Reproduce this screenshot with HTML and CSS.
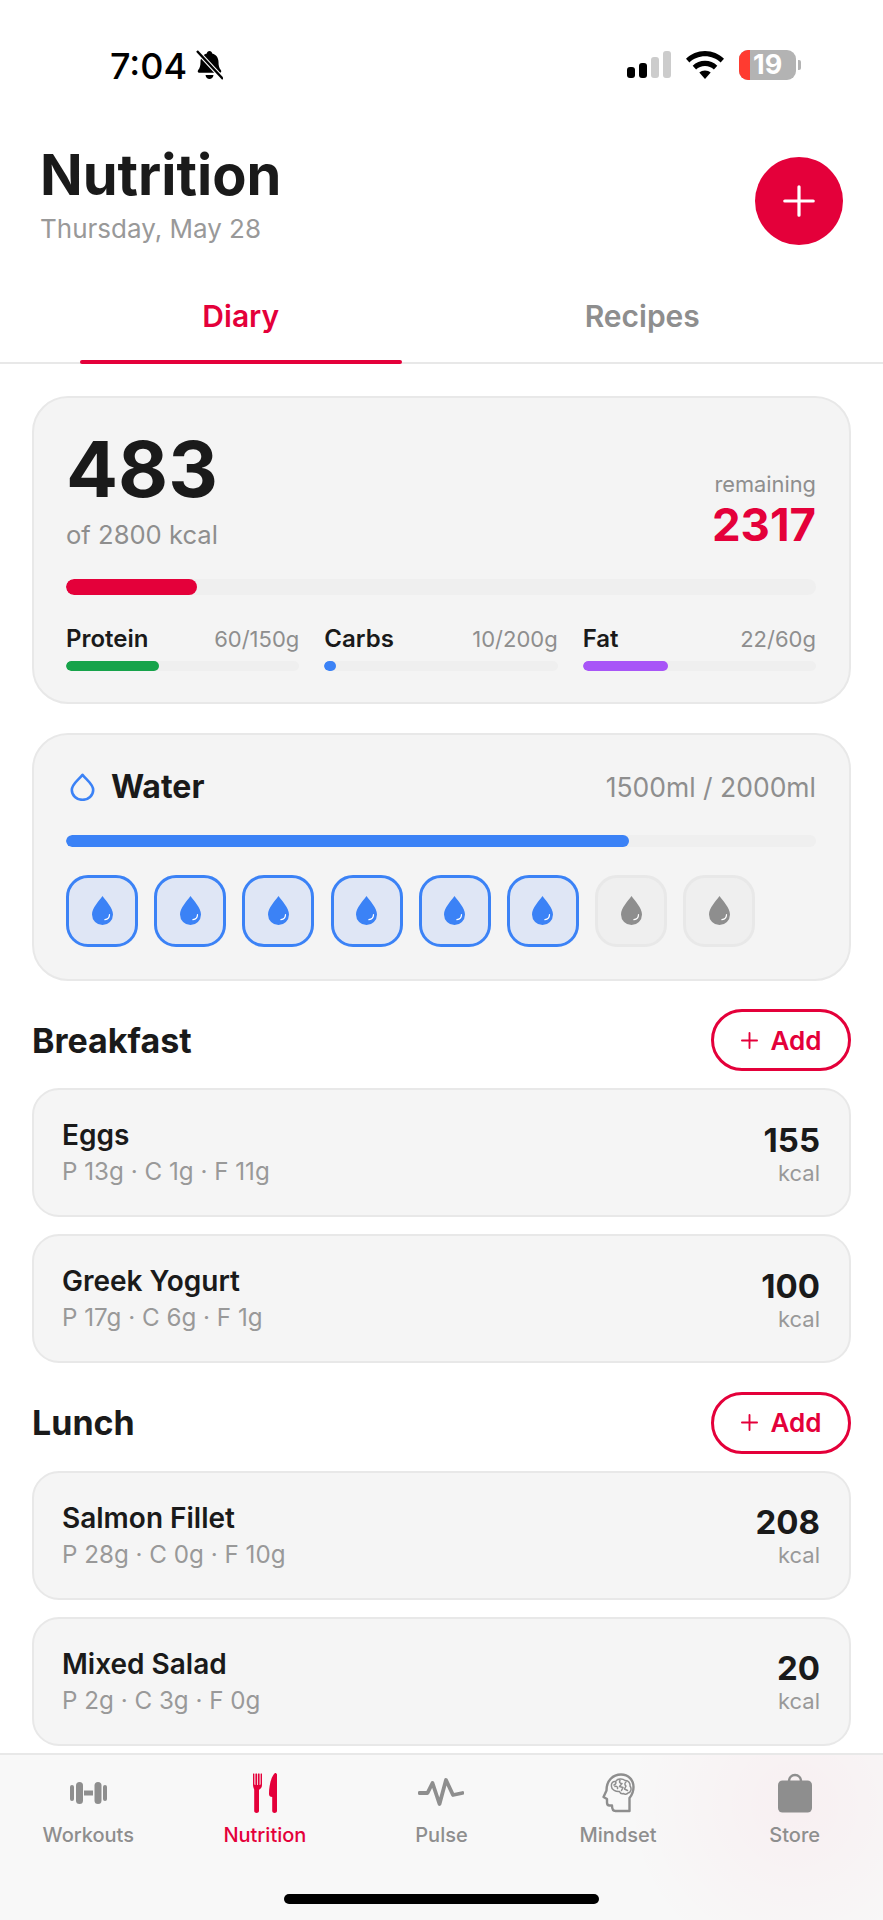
FILE: index.html
```html
<!DOCTYPE html>
<html>
<head>
  <title>Nutrition</title>
  <link rel="stylesheet" href="styles.css">
</head>
<body>
  <svg class="defs" width="0" height="0">
    <symbol id="drop" viewBox="0 0 21 29">
      <path fill="currentColor" d="M10.5 0C14 5 21 12 21 18.5a10.5 10.5 0 0 1-21 0C0 12 7 5 10.5 0Z"/>
      <path fill="none" stroke="#fff" stroke-width="1.2" stroke-linecap="round" d="M17.5 18.5c0 2.8-1.8 4.8-4.6 5.2"/>
    </symbol>
    <symbol id="plus" viewBox="0 0 18 18">
      <path fill="none" stroke="currentColor" stroke-linecap="round" d="M9 1v16M1 9h16"/>
    </symbol>
  </svg>

  <div class="status">
    <div class="status-left">
      <span class="time">7:04</span>
      <svg class="bell" viewBox="0 0 27 30" width="27" height="30">
        <path fill="#000" d="M13.5 1c1.5 0 2.5 1 2.700 2.400 4 1 6.300 4.400 6.300 8.600 0 3.400.6 6 2.300 8 1 1.200.4 2.800-1 2.800H3.200c-1.400 0-2-1.600-1-2.800 1.700-2 2.300-4.600 2.300-8 0-4.200 2.300-7.600 6.300-8.600C11 2 12 1 13.500 1ZM9.500 25h8c-.3 2.400-2 4-4 4s-3.700-1.600-4-4Z"/>
        <path stroke="#fff" stroke-width="4.500" d="M1 1l25 27"/>
        <path stroke="#000" stroke-width="2.400" d="M1 1l26 28"/>
      </svg>
    </div>
    <div class="status-right">
      <div class="signal">
        <i class="on s1"></i><i class="on s2"></i><i class="s3"></i><i class="s4"></i>
      </div>
      <svg class="wifi" viewBox="0 0 38 28" width="38" height="28">
        <path fill="#000" d="M19 0c7.400 0 14 2.900 19 7.700l-3.400 3.700C30.500 7.500 25 5.200 19 5.200S7.500 7.500 3.400 11.400L0 7.700C5 2.900 11.600 0 19 0Z"/>
        <path fill="#000" d="M19 9.800c4.700 0 9 1.800 12.300 4.900l-3.400 3.700c-2.300-2.200-5.400-3.500-8.900-3.500s-6.600 1.300-8.900 3.500l-3.400-3.700C10 11.600 14.300 9.800 19 9.800Z"/>
        <path fill="#000" d="M19 19.400c2.200 0 4.200.8 5.700 2.200L19 28l-5.700-6.400c1.500-1.400 3.500-2.200 5.700-2.200Z"/>
      </svg>
      <div class="battery">
        <div class="battery-body"><span class="battery-low"></span><span class="battery-num">19</span></div>
        <span class="battery-cap"></span>
      </div>
    </div>
  </div>

  <div class="header">
    <div>
      <h1>Nutrition</h1>
      <p class="date">Thursday, May 28</p>
    </div>
    <div class="fab"><svg width="32" height="32"><use href="#plus"/></svg></div>
  </div>

  <div class="tabs">
    <div class="tab active">Diary</div>
    <div class="tab">Recipes</div>
  </div>

  <div class="main">
    <div class="card calories">
      <div class="cal-top">
        <div>
          <div class="cal-num">483</div>
          <div class="cal-of">of 2800 kcal</div>
        </div>
        <div class="cal-right">
          <div class="cal-label">remaining</div>
          <div class="cal-left">2317</div>
        </div>
      </div>
      <div class="bar bar-main"><div class="fill red" style="width:17.4%"></div></div>
      <div class="macros">
        <div>
          <div class="macro-row"><b>Protein</b><span>60/150g</span></div>
          <div class="bar bar-small"><div class="fill green" style="width:40%"></div></div>
        </div>
        <div>
          <div class="macro-row"><b>Carbs</b><span>10/200g</span></div>
          <div class="bar bar-small"><div class="fill blue" style="width:5%"></div></div>
        </div>
        <div>
          <div class="macro-row"><b>Fat</b><span>22/60g</span></div>
          <div class="bar bar-small"><div class="fill purple" style="width:36.67%"></div></div>
        </div>
      </div>
    </div>

    <div class="card water">
      <div class="water-top">
        <div class="water-title">
          <svg viewBox="0 0 25 28" width="25" height="28"><path fill="none" stroke="#3b82f6" stroke-width="2.600" stroke-linejoin="round" d="M12.500 1.800C16 6.500 23.200 11 23.200 17a10.700 9.800 0 0 1-21.400 0C1.800 11 9 6.500 12.500 1.800Z"/></svg>
          <span>Water</span>
        </div>
        <span class="water-amount">1500ml / 2000ml</span>
      </div>
      <div class="bar bar-water"><div class="fill blue" style="width:75%"></div></div>
      <div class="glasses">
        <div class="glass full"><svg width="21" height="29"><use href="#drop"/></svg></div>
        <div class="glass full"><svg width="21" height="29"><use href="#drop"/></svg></div>
        <div class="glass full"><svg width="21" height="29"><use href="#drop"/></svg></div>
        <div class="glass full"><svg width="21" height="29"><use href="#drop"/></svg></div>
        <div class="glass full"><svg width="21" height="29"><use href="#drop"/></svg></div>
        <div class="glass full"><svg width="21" height="29"><use href="#drop"/></svg></div>
        <div class="glass"><svg width="21" height="29"><use href="#drop"/></svg></div>
        <div class="glass"><svg width="21" height="29"><use href="#drop"/></svg></div>
      </div>
    </div>

    <div class="meal">
      <div class="meal-head">
        <h2>Breakfast</h2>
        <div class="add"><svg width="17" height="17"><use href="#plus"/></svg>Add</div>
      </div>
      <div class="item">
        <div><div class="item-name">Eggs</div><div class="item-macros">P 13g · C 1g · F 11g</div></div>
        <div class="item-cal"><div class="item-num">155</div><div class="item-unit">kcal</div></div>
      </div>
      <div class="item">
        <div><div class="item-name">Greek Yogurt</div><div class="item-macros">P 17g · C 6g · F 1g</div></div>
        <div class="item-cal"><div class="item-num">100</div><div class="item-unit">kcal</div></div>
      </div>
    </div>

    <div class="meal">
      <div class="meal-head">
        <h2>Lunch</h2>
        <div class="add"><svg width="17" height="17"><use href="#plus"/></svg>Add</div>
      </div>
      <div class="item">
        <div><div class="item-name">Salmon Fillet</div><div class="item-macros">P 28g · C 0g · F 10g</div></div>
        <div class="item-cal"><div class="item-num">208</div><div class="item-unit">kcal</div></div>
      </div>
      <div class="item">
        <div><div class="item-name">Mixed Salad</div><div class="item-macros">P 2g · C 3g · F 0g</div></div>
        <div class="item-cal"><div class="item-num">20</div><div class="item-unit">kcal</div></div>
      </div>
    </div>
  </div>

  <div class="nav">
    <div class="nav-items">
      <div class="nav-item">
        <svg viewBox="0 -9 37 40" width="37" height="40"><g fill="currentColor"><rect x="0" y="3" width="4" height="16" rx="2"/><rect x="6" y="0" width="7" height="22" rx="3.500"/><rect x="14" y="8.500" width="9" height="5"/><rect x="24.500" y="0" width="7" height="22" rx="3.500"/><rect x="33" y="3" width="4" height="16" rx="2"/></g></svg>
        <span>Workouts</span>
      </div>
      <div class="nav-item active">
        <svg viewBox="0 0 24 40" width="24" height="40"><g fill="currentColor"><path d="M0 1c0-.6 1.400-.6 1.400 0v10c0 .8.600 1 1 1V1c0-.6 1.700-.6 1.700 0v11h.8V1c0-.6 1.700-.6 1.700 0v11c.4 0 1-.2 1-1V1c0-.6 1.400-.6 1.400 0v11c0 2.500-1.400 4-3 4.800V38c0 2.600-4.800 2.600-4.800 0V16.800C1.400 16 0 14.500 0 12Z"/><path d="M22 0c1 0 2 .6 2 1.500V38c0 2.600-4.800 2.600-4.800 0V24c-2 0-3.200-1-3.200-3C16 13 18 3.500 22 0Z"/></g></svg>
        <span>Nutrition</span>
      </div>
      <div class="nav-item">
        <svg viewBox="0 -4 46 40" width="46" height="40"><path fill="none" stroke="currentColor" stroke-width="3.800" stroke-linecap="round" stroke-linejoin="round" d="M1.500 16H9.500L14.500 6 21.500 27 28 3 35 18 44.500 16"/></svg>
        <span>Pulse</span>
      </div>
      <div class="nav-item">
        <svg viewBox="0 0 33 40" width="33" height="40"><g fill="none" stroke="currentColor" stroke-linecap="round" stroke-linejoin="round"><path stroke-width="2.400" d="M27.500 38H13.500c-2.500 0-3.500-2-3.500-5.500H7.500c-2 0-2.500-1.500-2.500-3V26L1.500 24 4.500 17.500C4.500 7.500 11 1.500 19 1.500c7.500 0 12.500 5.500 12.500 12.500 0 5-1.500 8-4 11Z"/><path stroke-width="1.500" d="M9.500 13c-.5-3 1.500-5 4-4.500 1.500-3 7-3.500 9.500-1 3-.5 5.500 2.500 5 5.500 2 2.500 1 6.500-2 7-1 1.500-3.500 1.500-4.500.5-2 .5-3.500-.5-4-2-3 .5-8.500-1.500-8-5.500ZM13.500 8.500c1 1.500 0 3-1.500 3.500M13 13.500c1.500-.5 3 .5 2.500 2M18 7.500c-1 1.500 0 3 2 3l-2.500 3 3.500 1-1.500 3M24 9c-1.500 1-1.500 3 0 4l-1.500 3 3 1.500"/></g></svg>
        <span>Mindset</span>
      </div>
      <div class="nav-item">
        <svg viewBox="0 0 34 39" width="34" height="40"><path fill="none" stroke="currentColor" stroke-width="2.400" d="M11 8c0-4 2.500-6.500 6-6.500s6 2.500 6 6.500"/><rect y="7" width="34" height="32" rx="4.500" fill="currentColor"/></svg>
        <span>Store</span>
      </div>
    </div>
    <div class="home-bar"></div>
  </div>
</body>
</html>
```

FILE: styles.css
```css
* {
  box-sizing: border-box;
  margin: 0;
  padding: 0;
}

body {
  font-family: Inter, "Liberation Sans", sans-serif;
  background: #fff;
  color: #1a1a1a;
  width: 883px;
  height: 1920px;
  display: flex;
  flex-direction: column;
  overflow: hidden;
}

.defs {
  display: block;
  height: 0;
}

/* status bar */
.status {
  height: 130px;
  flex-shrink: 0;
  display: flex;
  justify-content: space-between;
  align-items: center;
  padding: 0 82px 0 110px;
}

.status-left {
  display: flex;
  align-items: center;
  gap: 9px;
}

.time {
  font-size: 36px;
  font-weight: 500;
  color: #000;
  margin-top: 1px;
}

.status-right {
  display: flex;
  align-items: center;
  gap: 15px;
  margin-top: -1px;
}

.signal {
  display: flex;
  align-items: flex-end;
  gap: 4px;
  height: 27px;
}

.signal i {
  display: block;
  width: 8px;
  border-radius: 3px;
  background: #ccc;
}

.signal .on { background: #000; }
.signal .s1 { height: 11px; }
.signal .s2 { height: 15px; }
.signal .s3 { height: 21px; }
.signal .s4 { height: 27px; }

.battery {
  display: flex;
  align-items: center;
  gap: 2px;
}

.battery-body {
  width: 57px;
  height: 30px;
  border-radius: 9px;
  overflow: hidden;
  background: #b3b3b3;
  display: flex;
  align-items: center;
}

.battery-low {
  width: 11px;
  height: 100%;
  background: #ff3b30;
}

.battery-num {
  color: #fff;
  font-size: 27px;
  font-weight: 700;
  margin-left: 3px;
}

.battery-cap {
  width: 3px;
  height: 10px;
  border-radius: 0 2px 2px 0;
  background: #b3b3b3;
}

/* header */
.header {
  flex-shrink: 0;
  margin-top: 15px;
  padding: 0 40px;
  display: flex;
  justify-content: space-between;
  align-items: flex-end;
}

h1 {
  font-size: 56px;
  line-height: 60px;
  font-weight: 700;
}

.date {
  font-size: 26px;
  line-height: 32px;
  margin-top: 8px;
  color: #999;
}

.fab {
  width: 88px;
  height: 88px;
  border-radius: 50%;
  background: #e4003a;
  color: #fff;
  display: flex;
  align-items: center;
  justify-content: center;
  stroke-width: 1.8;
}

.tabs {
  flex-shrink: 0;
  display: flex;
  margin-top: 53px;
  padding: 0 40px;
  border-bottom: 2px solid #e8e8e8;
}

.tab {
  flex: 1;
  position: relative;
  text-align: center;
  font-size: 30px;
  line-height: 36px;
  font-weight: 600;
  color: #8e8e8e;
  padding-bottom: 28px;
}

.tab.active { color: #e4003a; }

.tab.active::after {
  content: '';
  position: absolute;
  left: 40px;
  right: 40px;
  bottom: -2px;
  height: 4px;
  border-radius: 2px;
  background: #e4003a;
}

/* content */
.main {
  flex: 1;
  min-height: 0;
  overflow: hidden;
  padding: 32px 32px 0 32px;
  display: flex;
  flex-direction: column;
  gap: 28.5px;
}

.card {
  background: #f4f4f4;
  border: 2px solid #e8e8e8;
  border-radius: 36px;
  flex-shrink: 0;
}

.calories {
  padding: 29px 33px 31px 32px;
}

.cal-top {
  display: flex;
  justify-content: space-between;
  align-items: flex-end;
}

.cal-num {
  font-size: 77px;
  line-height: 84px;
  font-weight: 700;
}

.cal-of {
  font-size: 25.6px;
  line-height: 32px;
  margin-top: 8px;
  color: #8e8e8e;
}

.cal-right {
  text-align: right;
  padding-bottom: 2px;
}

.cal-label {
  font-size: 21.8px;
  line-height: 30px;
  color: #8e8e8e;
}

.cal-left {
  font-size: 45.5px;
  line-height: 48px;
  margin-top: 2px;
  font-weight: 700;
  color: #e4003a;
}

.bar {
  background: #efefef;
  border-radius: 8px;
  overflow: hidden;
}

.fill {
  height: 100%;
  border-radius: 8px;
}

.red { background: #e4003a; }
.green { background: #16a34a; }
.blue { background: #3b82f6; }
.purple { background: #a855f7; }

.bar-main {
  height: 16px;
  margin-top: 28px;
}

.macros {
  display: grid;
  grid-template-columns: repeat(3, 1fr);
  gap: 25px;
  margin-top: 29px;
}

.macro-row {
  display: flex;
  justify-content: space-between;
  align-items: center;
  line-height: 30px;
}

.macro-row b {
  font-size: 24px;
  font-weight: 600;
}

.macro-row span {
  font-size: 22px;
  color: #8e8e8e;
}

.bar-small {
  height: 10px;
  margin-top: 7px;
}

.water {
  padding: 33px 33px 32px 32px;
}

.water-top {
  display: flex;
  justify-content: space-between;
  align-items: center;
}

.water-title {
  display: flex;
  align-items: center;
  gap: 16px;
  padding-left: 4px;
  font-size: 32px;
  line-height: 38px;
  font-weight: 700;
}

.water-amount {
  font-size: 26.5px;
  color: #8e8e8e;
}

.bar-water {
  height: 12px;
  margin-top: 29px;
}

.glasses {
  display: flex;
  gap: 16.2px;
  margin-top: 28px;
}

.glass {
  width: 72px;
  height: 72px;
  border: 3.500px solid #e8e8e8;
  border-radius: 22px;
  background: #efefef;
  color: #8e8e8e;
  display: flex;
  align-items: center;
  justify-content: center;
}

.glass.full {
  border-color: #3b82f6;
  background: #dfe6f5;
  color: #3b82f6;
}

.meal {
  display: flex;
  flex-direction: column;
  gap: 17px;
  flex-shrink: 0;
}

.meal-head {
  display: flex;
  justify-content: space-between;
  align-items: center;
}

h2 {
  font-size: 34px;
  font-weight: 700;
}

.add {
  height: 62px;
  width: 140px;
  border: 3.500px solid #e4003a;
  border-radius: 31px;
  color: #e4003a;
  font-size: 26px;
  font-weight: 600;
  display: flex;
  align-items: center;
  justify-content: center;
  gap: 13px;
  stroke-width: 2;
}

.item {
  height: 129px;
  background: #f5f5f5;
  border: 2px solid #e8e8e8;
  border-radius: 27px;
  padding: 0 29px 0 28px;
  display: flex;
  justify-content: space-between;
  align-items: center;
}

.item-name {
  font-size: 28px;
  line-height: 34px;
  font-weight: 600;
}

.item-macros {
  font-size: 24.2px;
  line-height: 30px;
  margin-top: 5px;
  color: #999;
}

.item-cal {
  text-align: right;
  padding-top: 2px;
}

.item-num {
  font-size: 33px;
  line-height: 38px;
  font-weight: 700;
}

.item-unit {
  font-size: 22px;
  line-height: 28px;
  color: #999;
}

/* bottom nav */
.nav {
  flex-shrink: 0;
  height: 167px;
  background: radial-gradient(circle at 795px 50px, rgba(255, 0, 60, 0.035), rgba(255, 0, 60, 0) 170px), #f8f8f8;
  border-top: 2px solid #e8e8e8;
  padding-top: 18px;
  display: flex;
  flex-direction: column;
}

.nav-items {
  display: flex;
}

.nav-item {
  flex: 1;
  display: flex;
  flex-direction: column;
  align-items: center;
  gap: 9px;
  color: #8e8e8e;
  font-size: 20px;
  line-height: 26px;
  font-weight: 500;
}

.nav-item.active { color: #e4003a; }

.home-bar {
  width: 315px;
  height: 10px;
  border-radius: 5px;
  background: #000;
  margin: 46px auto 0;
}
```
